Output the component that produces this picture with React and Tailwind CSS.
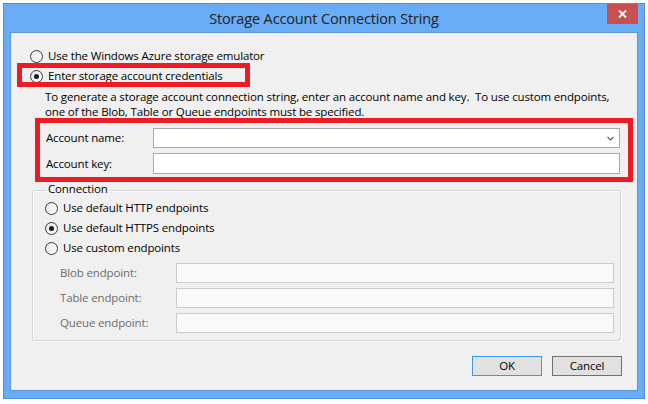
import React from 'react';

const font = { fontFamily: '"Open Sans", "Noto Sans", sans-serif' };

const Radio = ({ checked }) => (
  <span className="w-[13px] h-[13px] rounded-full border border-[#3c3c3c] bg-gradient-to-br from-[#e6e6e6] to-white flex items-center justify-center shrink-0">
    {checked && <span className="w-[5px] h-[5px] rounded-full bg-[#1a1a1a]" />}
  </span>
);

const RadioRow = ({ checked, label }) => (
  <div className="h-5 flex items-center gap-[5px]">
    <Radio checked={checked} />
    <span>{label}</span>
  </div>
);

const EndpointRow = ({ label }) => (
  <div className="flex items-center h-5">
    <span className="w-[116px] shrink-0 text-[#6d6d6d]">{label}</span>
    <div className="flex-1 h-full border border-[#cccccc] bg-[#f9f9f9]" />
  </div>
);

export default function App() {
  return (
    <div className="w-[648px] h-[404px] bg-white pt-[3px] pl-[3px] text-[11.5px] tracking-[-0.15px] text-black" style={font}>
      <div className="w-[642px] h-[396px] border border-[#4f8fd8] bg-[#6aacf5] flex flex-col px-[6px] pb-[7px]">
        {/* title bar */}
        <div className="h-[28px] grid grid-cols-[1fr_auto_1fr]">
          <div />
          <div className="self-center text-[14.5px] text-[#222] leading-none pt-[2px]">Storage Account Connection String</div>
          <div className="justify-self-end self-start w-[31px] h-[20px] bg-[#c75050] flex items-center justify-center">
            <svg width="9" height="8" viewBox="0 0 9 8">
              <path d="M1 0.5 L8 7.5 M8 0.5 L1 7.5" stroke="#fff" strokeWidth="1.8" />
            </svg>
          </div>
        </div>

        {/* content */}
        <div className="flex-1 border border-[#5d96d8] bg-[#f0f0f0] relative flex flex-col">
          <div className="pt-[13px] pl-[19px]">
            <RadioRow label="Use the Windows Azure storage emulator" />
            <RadioRow checked label="Enter storage account credentials" />
          </div>

          <div className="mt-[3px] pl-[34px] leading-[15px]">
            <p>To generate a storage account connection string, enter an account name and key.&nbsp; To use custom endpoints,</p>
            <p>one of the Blob, Table or Queue endpoints must be specified.</p>
          </div>

          <div className="mt-[9px] pl-[35px] pr-[17px] flex flex-col gap-[5px]">
            <div className="flex items-center h-5">
              <span className="w-[107px] shrink-0">Account name:</span>
              <div className="flex-1 h-full border border-[#a9a9a9] bg-white flex items-center justify-end pr-[5px]">
                <svg width="7" height="5" viewBox="0 0 7 5">
                  <path d="M0.5 0.8 L3.5 3.8 L6.5 0.8" stroke="#555" strokeWidth="1.2" fill="none" />
                </svg>
              </div>
            </div>
            <div className="flex items-center h-[21px]">
              <span className="w-[107px] shrink-0">Account key:</span>
              <div className="flex-1 h-full border border-[#a9a9a9] bg-white" />
            </div>
          </div>

          <fieldset className="mt-[8px] ml-[21px] mr-[16px] border border-[#d5d5d5] rounded-[3px] shadow-[inset_1px_1px_0_#fff,1px_1px_0_#fff] pl-[12px] pr-[6px] pb-[7px]">
            <legend className="ml-[1px] px-[2px] h-[16px] leading-[14px]">Connection</legend>
            <RadioRow label="Use default HTTP endpoints" />
            <RadioRow checked label="Use default HTTPS endpoints" />
            <RadioRow label="Use custom endpoints" />
            <div className="mt-[5px] pl-[15px] flex flex-col gap-[5px]">
              <EndpointRow label="Blob endpoint:" />
              <EndpointRow label="Table endpoint:" />
              <EndpointRow label="Queue endpoint:" />
            </div>
          </fieldset>

          <div className="mt-[15px] pr-[15px] flex justify-end gap-[10px]">
            <button className="w-[70px] h-[20px] border border-[#3c98e6] bg-[#e1e1e1] leading-none">OK</button>
            <button className="w-[70px] h-[20px] border border-[#707070] bg-[#e1e1e1] leading-none">Cancel</button>
          </div>

          {/* red annotation boxes */}
          <div className="absolute left-[6px] top-[30px] w-[233px] h-[24px] border-[5px] border-[#ed1c24]" />
          <div className="absolute left-[24px] top-[85px] w-[598px] h-[64px] border-[5px] border-[#ed1c24]" />
        </div>
      </div>
    </div>
  );
}
